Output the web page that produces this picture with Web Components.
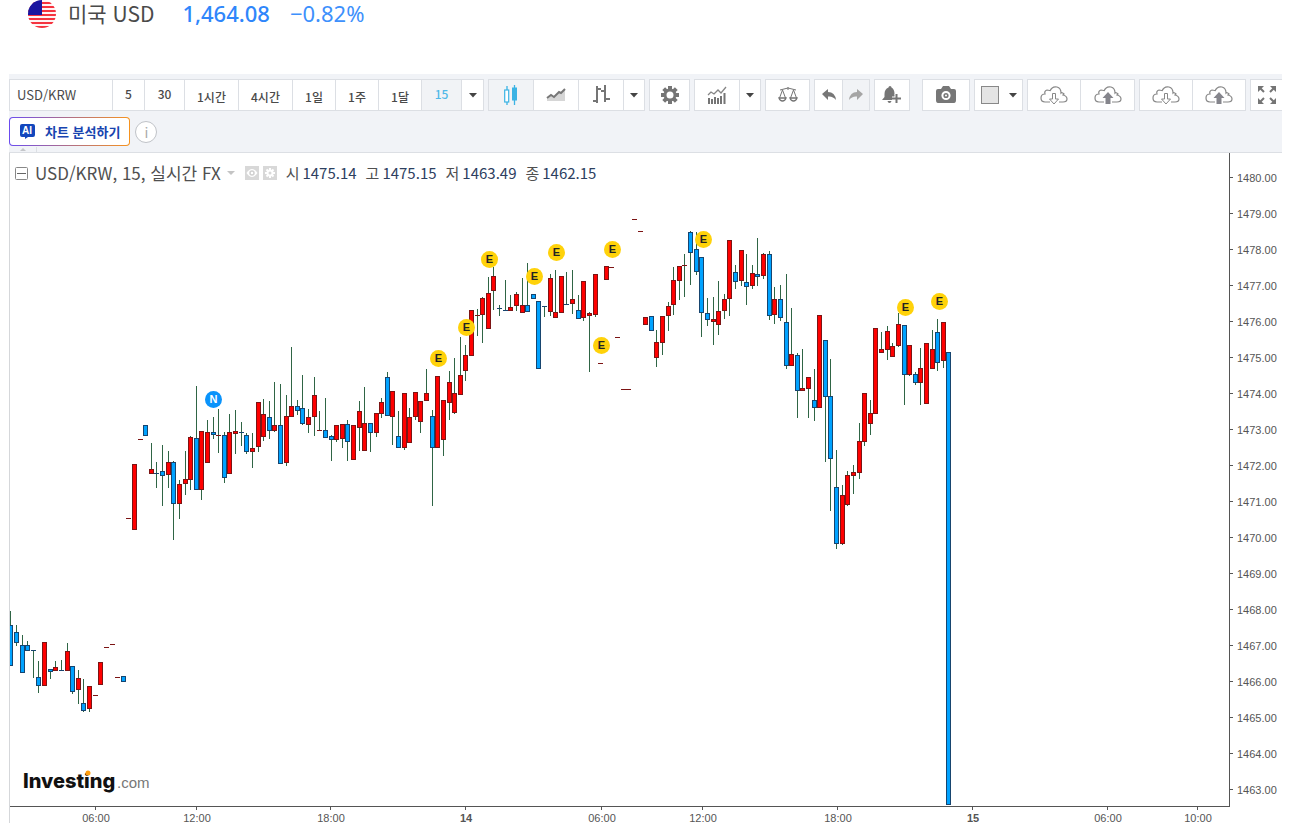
<!DOCTYPE html>
<html lang="ko">
<head>
<meta charset="UTF-8">
<meta name="viewport" content="width=device-width, initial-scale=1">
<title>USD/KRW</title>
<style>
    body { margin: 0; background: #fff; color: #4a4a4a; font-family: "Noto Sans CJK KR", "Noto Sans", sans-serif; }
</style>
</head>
<body>
<fx-page></fx-page>

<script>
// ICONOS DE LA BARRA
const ICONOS = {
    velas: `<svg width="16" height="22" viewBox="0 0 16 22"><path d="M4 2v4M4 18v3M11.500 1v20" stroke="#3bb3e4" stroke-width="1.300"/><rect x="1.700" y="6" width="4" height="12" fill="#fff" stroke="#3bb3e4" stroke-width="1.200"/><rect x="9" y="3.500" width="5" height="13" fill="#3bb3e4"/></svg>`,
    area: `<svg width="20" height="16" viewBox="0 0 20 16"><path d="M1 11l4-3 3 2 5-5 2 1 4-4v12H1z" fill="#d6d6d6"/><path d="M1 11l4-3 3 2 5-5 2 1 4-4" fill="none" stroke="#777" stroke-width="2"/></svg>`,
    barras: `<svg width="20" height="22" viewBox="0 0 20 22"><path d="M6 2v17M2 17h4M6 5h4M14 1v17M10 7h4M14 15h5" fill="none" stroke="#757575" stroke-width="2"/></svg>`,
    flecha: `<svg width="8" height="5" viewBox="0 0 8 5"><path d="M0 0h8L4 4.500z" fill="#444"/></svg>`,
    ajustes: `<svg width="18" height="18" viewBox="0 0 18 18"><g stroke="#757575" stroke-width="4"><path d="M9 0v18M0 9h18M2.700 2.700l12.600 12.600M15.300 2.700L2.700 15.300"/></g><circle cx="9" cy="9" r="5" fill="#fff" stroke="#757575" stroke-width="3"/></svg>`,
    indicadores: `<svg width="20" height="18" viewBox="0 0 20 18"><path d="M2 12v6M5 13v5M8 11v7M11 12v6M14 10v8M17.500 7v11" stroke="#757575" stroke-width="2"/><path d="M1 9l3-3 3 2 4-4 3 3 5-6" fill="none" stroke="#858585" stroke-width="1.300"/></svg>`,
    balanza: `<svg width="20" height="18" viewBox="0 0 20 18" fill="none" stroke="#757575"><path d="M2 4q4-1 8-2 4 1 8 2M10 1v3M4.500 4L1.500 12M4.500 4l3 8M15.500 4l-3 8M15.500 4l3 8"/><path d="M1 12h7q-1 3-3.500 3T1 12zM12 12h7q-1 3-3.500 3T12 12z" stroke-width="1.300"/></svg>`,
    deshacer: `<svg width="14" height="12" viewBox="0 0 14 12"><path d="M0 5l6-5v3q7 0 8 8-3-4-8-3.500V11z" fill="#777"/></svg>`,
    rehacer: `<svg width="14" height="12" viewBox="0 0 14 12"><path d="M14 5L8 0v3Q1 3 0 11q3-4 8-3.500V11z" fill="#a5a5a5"/></svg>`,
    alerta: `<svg width="20" height="18" viewBox="0 0 20 18"><path d="M8 0q1.500 0 1.500 1.500Q12.500 3 12.500 8l1.500 4v2H0l2.500-3V8q0-5 4-6.500Q6.500 0 8 0zM5.500 15h4q-.5 2-2 2t-2-2z" fill="#757575"/><path d="M14.500 8v9M10 12.500h9" stroke="#fff" stroke-width="4"/><path d="M14.500 8v9M10 12.500h9" stroke="#757575" stroke-width="2"/></svg>`,
    camara: `<svg width="22" height="18" viewBox="0 0 22 18"><path d="M3 3h3l2-3h6l2 3h3q2 0 2 2v9q0 3-2 3H3q-2 0-2-3V5q0-2 2-2z" fill="#777"/><circle cx="11" cy="9.500" r="3.600" fill="#777" stroke="#fff" stroke-width="2"/><circle cx="11" cy="9.500" r="1" fill="#fff"/></svg>`,
    color: `<svg width="18" height="18" viewBox="0 0 18 18"><rect x=".5" y=".5" width="17" height="17" fill="#e4e4e4" stroke="#888"/></svg>`,
    bajar: `<svg width="28" height="20" viewBox="0 0 28 20"><path d="M10 17H5Q1 17 1 13t4-4Q4 6 7 5q3 0 3 1 2-5 7-4 4 1 4 6 1-1 3 1l-1 1q4 1 4 4t-4 3h-4" fill="none" stroke="#888" stroke-width="1.200"/><path d="M12.500 8.500h3V14h3l-4.500 5-4.500-5h3z" fill="#fff" stroke="#888"/></svg>`,
    subir: `<svg width="28" height="20" viewBox="0 0 28 20"><path d="M10 17H5Q1 17 1 13t4-4Q4 6 7 5q3 0 3 1 2-5 7-4 4 1 4 6 1-1 3 1l-1 1q4 1 4 4t-4 3h-5" fill="none" stroke="#888" stroke-width="1.200"/><path d="M11.500 19v-6H8.500l5.500-6 5.500 6h-3v6z" fill="#85858c"/></svg>`,
    pantalla: `<svg width="20" height="20" viewBox="0 0 20 20"><path d="M1 1h6L1 7zM19 1h-6l6 6zM1 19h6l-6-6zM19 19h-6l6-6z" fill="#757575"/><path d="M3 3l4 4M17 3l-4 4M3 17l4-4M17 17l-4-4" stroke="#757575" stroke-width="2"/></svg>`
};

// VELAS: maximo, arriba, abajo, minimo y color (r = sube, b = baja)
const VELAS = `611 625 665 665 b|625 632 642 646 b|635 645 672 672 b|641 645 650 650 b|650 650 650 678 b|661 677 685 693 b|642 642 685 685 r|669 669 671 679 b|661 667 670 670 r|660 670 670 670 b|643 651 670 670 r|666 666 691 694 b|670 678 689 704 r|679 703 710 712 b|686 686 708 712 r|695 695 695 695 r|662 662 684 684 r|647 647 647 647 r|644 644 644 644 r|677 677 677 677 r|676 676 681 681 b
518 518 518 518 r|464 464 529 529 r|439 439 439 439 r|425 425 435 435 b|443 469 473 473 r|462 473 473 488 b|445 471 475 506 b|451 462 474 488 r|461 462 503 540 b|480 484 503 519 r|451 479 483 495 r|436 437 479 490 r|386 438 489 489 b|431 431 489 500 r|420 432 462 462 r|417 432 434 439 b|409 435 435 453 r|432 435 477 483 b|414 432 473 473 r|410 431 433 454 r|422 432 432 446 b|433 435 451 454 b|433 448 451 468 r|402 402 446 452 r|399 414 436 441 r|401 417 430 439 b|382 425 430 432 r|384 425 463 463 b|395 416 462 466 r|347 406 416 416 r|400 406 410 415 b|375 408 423 425 b|409 417 424 433 r|377 395 416 436 r
411 430 430 430 r|398 430 437 437 b|435 436 439 461 b|425 425 439 442 r|424 424 438 448 r|420 424 441 461 b|425 425 459 459 r|401 411 427 451 r|387 423 450 450 r|423 423 432 452 b|413 413 432 437 r|398 402 413 418 r|372 377 415 415 b|391 391 416 445 r|411 436 447 447 b|393 393 447 450 r|408 417 442 442 r|392 392 416 420 r|401 401 421 433 r|369 393 400 400 r|410 416 447 506 b|376 376 447 448 r|400 400 439 456 r|371 382 402 420 r|358 393 412 414 r
337 375 394 395 r|345 355 370 381 r|310 310 355 356 r|309 315 315 336 r|297 298 314 343 r|277 293 328 328 r|267 276 290 310 r|305 308 308 316 b|280 310 310 310 b|295 307 310 310 r|292 294 305 311 r|278 305 312 312 r|263 305 311 311 b|294 294 298 298 b|301 301 368 368 b|306 306 306 317 b|274 278 311 316 r|270 312 317 317 r|276 276 312 312 r|272 304 304 304 b|270 299 303 314 r|295 310 318 318 b|281 281 317 321 r|312 313 315 372 r|274 274 314 317 r|363 363 363 363 r|266 266 279 279 r|267 267 267 267 r|337 337 337 337 r|389 389 389 389 r|389 389 389 389 r|219 219 219 219 r|231 231 231 231 r
317 317 324 324 r|316 316 330 330 b|330 342 357 367 r|316 316 342 355 r|302 306 315 331 r|267 280 304 315 r|266 266 280 300 r|254 265 265 297 r|231 232 252 285 b|232 249 271 275 b|257 257 312 337 b|298 313 319 326 b|297 319 321 345 r|281 311 324 335 r|294 299 310 319 r|240 240 298 316 r|265 272 281 289 b|250 250 280 286 r|254 282 286 305 b|265 273 285 289 r|238 274 276 286 b|253 254 275 279 r|251 254 315 320 b|287 299 314 324 r|285 299 317 321 b|274 322 365 369 b|308 354 365 366 r
353 355 390 418 b|349 388 390 390 r|377 377 388 418 r|369 400 407 421 b|315 315 407 407 r|340 340 396 462 b|359 396 458 511 b|450 487 543 549 b|485 495 543 545 r|471 475 504 506 r|465 472 475 494 r|423 441 472 479 r|393 393 441 446 r|400 413 423 435 r|328 328 413 413 r|332 349 352 352 r|326 331 349 360 r|343 346 356 357 r|313 324 345 347 r|325 325 374 405 b|345 345 374 376 r|372 374 382 385 b|348 368 382 405 r|343 343 403 403 r|330 349 368 369 r|319 332 362 371 b|322 322 360 368 r|352 352 804 804 b`;

const MARCAS = [
    [214, 400, 'N'], [439, 359, 'E'], [467, 328, 'E'], [490, 260, 'E'], [535, 277, 'E'], [557, 253, 'E'],
    [613, 250, 'E'], [602, 346, 'E'], [704, 240, 'E'], [906, 308, 'E'], [940, 302, 'E']
];

const HORAS = [[96, '06:00'], [197, '12:00'], [331, '18:00'], [466, '14'], [602, '06:00'], [703, '12:00'], [838, '18:00'], [973, '15'], [1108, '06:00'], [1198, '10:00']];

// COTIZACION DE ARRIBA
class FxQuote extends HTMLElement {
    constructor() { super(); this.attachShadow({ mode: 'open' }); }

    connectedCallback() {
        let franjas = '';
        for (let i = 0; i < 7; i++) franjas += `<rect y="${i * 4 + 2}" width="28" height="2" fill="#f5333f"/>`;
        this.shadowRoot.innerHTML = `
        <style>
            :host { display: flex; align-items: center; height: 27px; padding-left: 28px; font-size: 22px; line-height: 27px; white-space: nowrap; }
            svg { flex: none; margin-right: 12px; }
            .nombre { font-size: 21px; margin-right: 28px; color: #4a4a4a; }
            .precio, .cambio { font-family: "Noto Sans", sans-serif; }
            .precio { font-weight: 500; color: #2f86fb; margin-right: 20px; }
            .cambio { color: #3d90fc; }
        </style>
        <svg width="28" height="28" viewBox="0 0 28 28" aria-hidden="true">
            <defs><clipPath id="c"><circle cx="14" cy="14" r="14"/></clipPath></defs>
            <g clip-path="url(#c)"><rect width="28" height="28" fill="#fff3f3"/>${franjas}<rect width="14" height="15" fill="#1a16a0"/></g>
        </svg>
        <span class="nombre"><slot></slot></span>
        <span class="precio"><slot name="precio"></slot></span>
        <span class="cambio"><slot name="cambio"></slot></span>`;
    }
}
customElements.define('fx-quote', FxQuote);

// GRUPO DE BOTONES
class ToolGroup extends HTMLElement {
    constructor() { super(); this.attachShadow({ mode: 'open' }); }

    connectedCallback() {
        this.shadowRoot.innerHTML = `
        <style>
            :host { display: flex; flex: none; border: 1px solid #dcdfe4; background: #fff; height: 30px; }
            ::slotted(:not(:last-child)) { border-right: 1px solid #dcdfe4; }
        </style>
        <slot></slot>`;
    }
}
customElements.define('tool-group', ToolGroup);

class ToolButton extends HTMLElement {
    constructor() { super(); this.attachShadow({ mode: 'open' }); }

    connectedCallback() {
        const icono = this.getAttribute('icono');
        const activo = this.hasAttribute('activo');
        this.shadowRoot.innerHTML = `
        <style>
            :host { display: flex; box-sizing: border-box; width: var(--w, 45px); }
            button { flex: 1; display: flex; align-items: center; justify-content: center; gap: 10px; padding: 0; border: 0; cursor: pointer;
                background: ${activo ? '#f1f3f6' : '#fff'}; color: ${activo ? '#4fb9e8' : '#4a4a4a'}; font: 500 12px/16px "Noto Sans CJK KR", sans-serif; white-space: nowrap; }
            :host(.num) button { padding-bottom: 2px; }
            :host(.kr) button { padding-top: 4px; }
            svg { display: block; flex: none; }
        </style>
        <button type="button" ${icono ? `aria-label="${this.getAttribute('nombre')}"` : ''}>${icono ? icono.split(' ').map(i => ICONOS[i]).join('') : '<slot></slot>'}</button>`;
    }
}
customElements.define('tool-button', ToolButton);

// BARRA DE HERRAMIENTAS
class ChartToolbar extends HTMLElement {
    constructor() { super(); this.attachShadow({ mode: 'open' }); }

    connectedCallback() {
        const intervalos = [['5', 32], ['30', 40], ['1시간', 54], ['4시간', 54], ['1일', 43], ['1주', 43], ['1달', 43], ['15', 40]];
        this.shadowRoot.innerHTML = `
        <style>
            :host { display: block; background: #f1f3f7; border-bottom: 1px solid #dcdfe4; padding-top: 5px; }
            .fila { display: flex; gap: 4px; overflow: hidden; }
            .aparte { margin-left: 8px; }
            input { box-sizing: border-box; width: 103px; border: 0; border-right: 1px solid #dcdfe4; padding: 0 7px; color: #4a4a4a; font: 13px/16px "Noto Sans CJK KR", sans-serif; background: #fff; }
            .abajo { display: flex; align-items: center; gap: 5px; height: 31px; padding-top: 5px; }
            .ai { display: flex; align-items: center; gap: 10px; height: 29px; padding: 0 9px 0 10px; border: 1px solid transparent; border-radius: 4px; cursor: pointer;
                background: linear-gradient(#fff, #fff) padding-box, linear-gradient(90deg, #6a4bf0, #f7931e) border-box;
                color: #1844b0; font: bold 13px/16px "Noto Sans CJK KR", sans-serif; white-space: nowrap; }
            .info { box-sizing: border-box; width: 22px; height: 22px; padding: 0; border: 1px solid #c0c3c8; border-radius: 50%; background: #fff; color: #aaa; font: 14px/18px "Noto Sans CJK KR", sans-serif; cursor: pointer; }
            .pestana { display: block; }
        </style>
        <div class="fila">
            <tool-group>
                <input type="text" value="USD/KRW" aria-label="종목">
                ${intervalos.map(([t, w]) => `<tool-button class="${/^\d+$/.test(t) ? 'num' : 'kr'}" style="--w:${w}px" ${t === '15' ? 'activo' : ''}>${t}</tool-button>`).join('')}
                <tool-button style="--w:21px" icono="flecha" nombre="주기"></tool-button>
            </tool-group>
            <tool-group>
                <tool-button icono="velas" nombre="캔들" activo></tool-button>
                <tool-button icono="area" nombre="영역"></tool-button>
                <tool-button icono="barras" nombre="바"></tool-button>
                <tool-button style="--w:20px" icono="flecha" nombre="차트 유형"></tool-button>
            </tool-group>
            <tool-group><tool-button style="--w:39px" icono="ajustes" nombre="설정"></tool-button></tool-group>
            <tool-group>
                <tool-button icono="indicadores" nombre="지표"></tool-button>
                <tool-button style="--w:20px" icono="flecha" nombre="지표 목록"></tool-button>
            </tool-group>
            <tool-group><tool-button style="--w:43px" icono="balanza" nombre="비교"></tool-button></tool-group>
            <tool-group>
                <tool-button style="--w:28px" icono="deshacer" nombre="실행 취소"></tool-button>
                <tool-button style="--w:26px" icono="rehacer" nombre="다시 실행" activo></tool-button>
            </tool-group>
            <tool-group><tool-button style="--w:34px" icono="alerta" nombre="알림"></tool-button></tool-group>
            <tool-group class="aparte"><tool-button style="--w:46px" icono="camara" nombre="스냅샷"></tool-button></tool-group>
            <tool-group><tool-button style="--w:47px" icono="color flecha" nombre="색상"></tool-button></tool-group>
            <tool-group>
                <tool-button style="--w:53px" icono="bajar" nombre="차트 불러오기"></tool-button>
                <tool-button style="--w:53px" icono="subir" nombre="차트 저장"></tool-button>
            </tool-group>
            <tool-group>
                <tool-button style="--w:53px" icono="bajar" nombre="템플릿 불러오기"></tool-button>
                <tool-button style="--w:52px" icono="subir" nombre="템플릿 저장"></tool-button>
            </tool-group>
            <tool-group><tool-button style="--w:32px" icono="pantalla" nombre="전체 화면"></tool-button></tool-group>
        </div>
        <div class="abajo">
            <button class="ai" type="button">
                <svg width="15" height="15" viewBox="0 0 15 15" aria-hidden="true"><path d="M2 0h11q2 0 2 2v9q0 2-2 2H8l-3 2v-2H2q-2 0-2-2V2q0-2 2-2z" fill="#1246bd"/><text x="7" y="10" text-anchor="middle" font-family="Liberation Sans, sans-serif" font-size="10" font-weight="bold" fill="#fff">AI</text></svg>
                차트 분석하기
            </button>
            <button class="info" type="button">i</button>
        </div>
        <svg class="pestana" width="28" height="5" viewBox="0 0 28 5" aria-hidden="true"><path d="M11 4l3-3 3 3z" fill="#c4c6ca"/><path d="M27.500 0v5" stroke="#dcdfe4"/></svg>`;
    }
}
customElements.define('chart-toolbar', ChartToolbar);

// LEYENDA SOBRE EL GRAFICO
class ChartLegend extends HTMLElement {
    constructor() { super(); this.attachShadow({ mode: 'open' }); }

    connectedCallback() {
        const valores = [['시', '1475.14'], ['고', '1475.15'], ['저', '1463.49'], ['종', '1462.15']];
        this.shadowRoot.innerHTML = `
        <style>
            :host { display: flex; align-items: center; line-height: 24px; white-space: nowrap; color: #505050; }
            svg { flex: none; display: block; }
            .titulo { font-size: 17px; margin: 0 6px 0 7px; }
            .iconos { display: flex; gap: 4px; margin: 0 9px 0 10px; }
            .valor { font-size: 15px; margin-right: 9px; }
            b { font-weight: 400; color: #2d405f; margin-left: 3px; }
        </style>
        <svg width="13" height="13" viewBox="0 0 13 13"><rect x=".5" y=".5" width="12" height="12" rx="1" fill="#fff" stroke="#888"/><path d="M2 6.500h9" stroke="#666"/></svg>
        <span class="titulo">USD/KRW, 15, 실시간 FX</span>
        <svg width="8" height="5" viewBox="0 0 8 5"><path d="M0 0h8L4 4z" fill="#c4c4c4"/></svg>
        <span class="iconos">
            <svg width="14" height="14" viewBox="0 0 14 14"><rect width="14" height="14" fill="#d8d8d8"/><path d="M1.500 7Q7-1 12.500 7 7 15 1.500 7z" fill="#fff"/><circle cx="7" cy="7" r="2" fill="#fff" stroke="#d0d0d0" stroke-width="1.500"/></svg>
            <svg width="14" height="14" viewBox="0 0 14 14"><rect width="14" height="14" fill="#d8d8d8"/><path d="M7 2v10M2 7h10M3.500 3.500l7 7M10.500 3.500l-7 7" stroke="#fff" stroke-width="2"/><circle cx="7" cy="7" r="2.500" fill="#d8d8d8" stroke="#fff" stroke-width="2"/></svg>
        </span>
        ${valores.map(([n, v]) => `<span class="valor">${n}<b>${v}</b></span>`).join('')}`;
    }
}
customElements.define('chart-legend', ChartLegend);

// GRAFICO DE VELAS
class CandleChart extends HTMLElement {
    constructor() { super(); this.attachShadow({ mode: 'open' }); }

    dibujarVelas() {
        return VELAS.split(/[|\n]/).map((vela, i) => {
            const [alto, arriba, abajo, bajo, tipo] = vela.split(' ');
            const x = Math.floor(10.9 + i * 5.617);
            const borde = tipo === 'r' ? '#7c1414' : '#17456f';
            const mecha = `<path d="M${x + 0.5} ${alto}V${bajo}" stroke="#2f6545"/>`;
            if (arriba === abajo) return `${mecha}<path d="M${x - 2} ${+arriba + 0.5}h5" stroke="${borde}"/>`;
            return `${mecha}<rect x="${x - 1.5}" y="${+arriba + 0.5}" width="4" height="${abajo - arriba}" fill="${tipo === 'r' ? '#f00' : '#00a2ff'}" stroke="${borde}"/>`;
        }).join('');
    }

    dibujarEjes() {
        let ejes = '<path d="M9.500 153V823" stroke="#d5d7da"/><path d="M1229.500 153V807M10 806.500H1230" stroke="#555"/>';
        for (let i = 0; i < 18; i++) {
            const y = 178 + i * 36;
            ejes += `<path d="M1230 ${y - 0.5}h3" stroke="#555"/><text x="1237" y="${y + 4}">${1480 - i}.00</text>`;
        }
        HORAS.forEach(([x, hora]) => {
            ejes += `<path d="M${x - 0.5} 807v3" stroke="#555"/><text x="${x}" y="822" text-anchor="middle" ${hora.length === 2 ? 'font-weight="bold"' : ''}>${hora}</text>`;
        });
        return ejes;
    }

    connectedCallback() {
        this.shadowRoot.innerHTML = `
        <style>
            :host { display: block; position: relative; }
            svg { display: block; width: 100%; height: auto; }
            text { font-family: "Liberation Sans", sans-serif; font-size: 11px; fill: #555; }
            .marca { font-size: 11px; font-weight: bold; fill: #222; }
            .marca.n { fill: #fff; }
            .logo { font-family: Inter, sans-serif; font-size: 20px; font-weight: 800; fill: #111; }
            .com { font-size: 15px; fill: #777; }
            ::slotted(chart-legend) { position: absolute; left: 6px; top: 8px; }
        </style>
        <svg viewBox="9 153 1273 672">
            <g>${this.dibujarVelas()}</g>
            <g>${this.dibujarEjes()}</g>
            ${MARCAS.map(([x, y, l]) => `<circle cx="${x - 0.5}" cy="${y - 0.5}" r="8.500" fill="${l === 'N' ? '#0a93fb' : '#ffd20a'}"/><text class="marca ${l.toLowerCase()}" x="${x - 0.5}" y="${y + 3}" text-anchor="middle">${l}</text>`).join('')}
            <text class="logo" x="23" y="788">Investing</text>
            <circle cx="88" cy="773" r="2.500" fill="#ff9f0f"/>
            <text class="com" x="117" y="788">.com</text>
        </svg>
        <slot></slot>`;
    }
}
customElements.define('candle-chart', CandleChart);

// PAGINA
class FxPage extends HTMLElement {
    constructor() { super(); this.attachShadow({ mode: 'open' }); }

    connectedCallback() {
        this.shadowRoot.innerHTML = `
        <style>
            :host { display: block; }
            main { margin: 47px 8px 0 9px; }
        </style>
        <fx-quote>미국 USD<span slot="precio">1,464.08</span><span slot="cambio">−0.82%</span></fx-quote>
        <main>
            <chart-toolbar></chart-toolbar>
            <candle-chart><chart-legend></chart-legend></candle-chart>
        </main>`;
    }
}
customElements.define('fx-page', FxPage);
</script>
</body>
</html>
